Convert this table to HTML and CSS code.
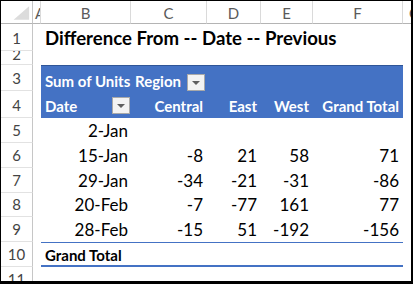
FILE: index.html
```html
<!DOCTYPE html>
<html>
<head>
<meta charset="utf-8">
<link rel="stylesheet" href="styles.css">
</head>
<body>
<div class="sheet">
  <div class="row hdr">
    <div class="corner"><svg width="32" height="23" viewBox="0 0 32 23"><polygon points="13,20 29,20 29,6" fill="#dcdcdc"/></svg></div>
    <div class="ch cha">A</div>
    <div class="ch">B</div>
    <div class="ch">C</div>
    <div class="ch">D</div>
    <div class="ch">E</div>
    <div class="ch">F</div>
    <div class="ch">G</div>
  </div>
  <div class="row r1">
    <div class="rh">1</div><div></div>
    <div class="title">Difference From -- Date -- Previous</div>
  </div>
  <div class="row r2">
    <div class="rh rh2">2</div>
  </div>
  <div class="row r3">
    <div class="rh rh3">3</div><div></div>
    <div class="pv pvt lab">Sum of Units</div>
    <div class="pv pvt lab split">Region<span class="dd dd3"><i></i></span></div>
    <div class="pv pvt"></div>
    <div class="pv pvt"></div>
    <div class="pv pvt"></div>
  </div>
  <div class="row r4">
    <div class="rh">4</div><div></div>
    <div class="pv lab split">Date<span class="dd dd4"><i></i></span></div>
    <div class="pv num">Central</div>
    <div class="pv num">East</div>
    <div class="pv num">West</div>
    <div class="pv num">Grand Total</div>
  </div>
  <div class="row rd">
    <div class="rh">5</div><div></div>
    <div class="dt">2-Jan</div><div class="num"></div><div class="num"></div><div class="num"></div><div class="num"></div>
  </div>
  <div class="row rd">
    <div class="rh">6</div><div></div>
    <div class="dt">15-Jan</div><div class="num">-8</div><div class="num">21</div><div class="num">58</div><div class="num">71</div>
  </div>
  <div class="row rd">
    <div class="rh">7</div><div></div>
    <div class="dt">29-Jan</div><div class="num">-34</div><div class="num">-21</div><div class="num">-31</div><div class="num">-86</div>
  </div>
  <div class="row rd r8">
    <div class="rh">8</div><div></div>
    <div class="dt">20-Feb</div><div class="num">-7</div><div class="num">-77</div><div class="num">161</div><div class="num">77</div>
  </div>
  <div class="row rd">
    <div class="rh">9</div><div></div>
    <div class="dt">28-Feb</div><div class="num">-15</div><div class="num">51</div><div class="num">-192</div><div class="num">-156</div>
  </div>
  <div class="row rd r10">
    <div class="rh">10</div><div></div>
    <div class="gt lab">Grand Total</div><div class="gt"></div><div class="gt"></div><div class="gt"></div><div class="gt"></div>
  </div>
  <div class="row rd">
    <div class="rh">11</div>
  </div>
</div>
</body>
</html>
```
FILE: styles.css
```css
html, body {
  margin: 0;
  padding: 0;
  background: #fff;
}
body {
  font-family: Lato, "Liberation Sans", sans-serif;
  color: #000;
}
.sheet {
  width: 413px;
  height: 284px;
  box-sizing: border-box;
  border: 1px solid #000;
  border-right-width: 2px;
  border-bottom-width: 3px;
  overflow: hidden;
  background: #fff;
}
.row {
  display: grid;
  grid-template-columns: 32px 8px 90px 76px 54px 52px 90px 24px;
}
.row > div {
  display: flex;
  align-items: flex-end;
  box-sizing: border-box;
  overflow: hidden;
  white-space: nowrap;
  line-height: 1;
  min-width: 0;
}
.hdr { height: 23px; }
.r1 { height: 27px; }
.r2 { height: 14px; }
.r3 { height: 26px; }
.r4 { height: 27px; }
.rd { height: 25px; }
.r8 { height: 24px; }

.corner {
  border-right: 1px solid #c6c6c6;
  border-bottom: 1px solid #b4b4b4;
}
.corner svg { display: block; }
.ch {
  justify-content: center;
  font-size: 15px;
  color: #5a5a5a;
  border-right: 1px solid #dadada;
  border-bottom: 1px solid #b4b4b4;
  padding-bottom: 2px;
}
.cha { justify-content: flex-start; padding-left: 2px; }

.rh {
  justify-content: center;
  font-size: 15px;
  color: #444;
  border-right: 1px solid #c6c6c6;
  border-bottom: 1px solid #e2e2e2;
  padding-bottom: 4px;
}
.rh2 { padding-bottom: 2px; }

.title {
  grid-column: 3 / span 6;
  font-weight: 700;
  font-size: 18.6px;
  padding-left: 4px;
  padding-bottom: 3px;
  overflow: visible;
}

.pv {
  background: #4472c4;
  color: #fff;
  font-weight: 700;
  font-size: 15px;
  padding-bottom: 4px;
}
.r3 .pv { padding-bottom: 2px; }
.pvt { border-top: 1px solid #2f5597; }
.lab { padding-left: 4px; }
.split { justify-content: space-between; padding-right: 1px; }
.num {
  justify-content: flex-end;
  padding-right: 4px;
  font-size: 17px;
  padding-bottom: 4px;
}
.pv.num { font-size: 15px; }
.dt {
  justify-content: flex-end;
  padding-right: 3px;
  font-size: 17px;
  padding-bottom: 4px;
}

.dd {
  width: 18px;
  height: 17px;
  box-sizing: border-box;
  border: 1px solid #a9a9a9;
  background: #f3f3f3;
  display: flex;
  align-items: center;
  justify-content: center;
}
.dd3 { margin-bottom: -2px; margin-right: 1px; }
.dd4 { margin-bottom: 0; }
.dd i {
  width: 0;
  height: 0;
  border-left: 4px solid transparent;
  border-right: 4px solid transparent;
  border-top: 4px solid #5f5f5f;
}

.gt {
  border-top: 1px solid #4472c4;
  border-bottom: 2px solid #4472c4;
  font-weight: 700;
  font-size: 15px;
  padding-bottom: 2px;
}
```
